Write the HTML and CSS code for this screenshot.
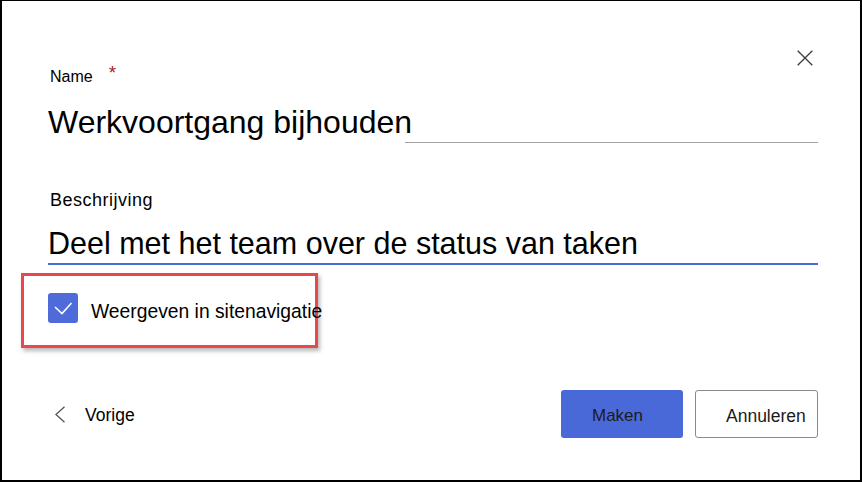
FILE: index.html
```html
<!DOCTYPE html>
<html>
<head>
<meta charset="utf-8">
<link rel="stylesheet" href="styles.css">
</head>
<body>
<div class="frame">
  <div class="close-row">
    <svg class="close" width="16" height="16" viewBox="0 0 16 16"><path d="M0.7 0.7 L15.3 15.3 M15.3 0.7 L0.7 15.3" stroke="#3a3a3a" stroke-width="1.3" fill="none"/></svg>
  </div>
  <div class="label-name">Name<span class="req">*</span></div>
  <div class="name-field">
    <span class="name-text">Werkvoortgang bijhouden</span>
    <span class="name-rule"></span>
  </div>
  <div class="label-desc">Beschrijving</div>
  <div class="desc-field">Deel met het team over de status van taken</div>
  <div class="highlight">
    <span class="checkbox">
      <svg width="30" height="30" viewBox="0 0 30 30"><polyline points="7,14 14,20.5 23.5,10" stroke="#fff" stroke-width="1.6" fill="none"/></svg>
    </span>
    <span class="check-label">Weergeven in sitenavigatie</span>
  </div>
  <div class="footer">
    <div class="back">
      <svg width="10" height="17" viewBox="0 0 10 17"><path d="M9.5 0.8 L1 8.5 L9.5 16.2" stroke="#555" stroke-width="1.3" fill="none"/></svg>
      <span class="back-text">Vorige</span>
    </div>
    <div class="spacer"></div>
    <div class="btn btn-primary">Maken</div>
    <div class="btn btn-secondary">Annuleren</div>
  </div>
</div>
</body>
</html>
```

FILE: styles.css
```css
body {
  margin: 0;
  font-family: "Liberation Sans", Arial, sans-serif;
  color: #000;
  background: #fff;
}

.frame {
  width: 862px;
  height: 482px;
  box-sizing: border-box;
  border: 2px solid #000;
  border-top-width: 1px;
  padding: 0 42px 0 46px;
  display: flex;
  flex-direction: column;
}

.close-row {
  display: flex;
  justify-content: flex-end;
  margin-top: 49px;
  height: 16px;
  padding-right: 5px;
}

.close {
  display: block;
}

.label-name {
  font-size: 16px;
  line-height: 20px;
  padding-left: 2px;
  padding-top: 1px;
  margin-bottom: -1px;
}

.req {
  color: #a4262c;
  font-size: 19px;
  line-height: 0;
  margin-left: 16px;
  vertical-align: 3px;
}

.name-field {
  margin-top: 16px;
  display: flex;
}

.name-text {
  font-size: 32px;
  line-height: 41px;
  width: 357px;
  flex: none;
  white-space: nowrap;
}

.name-rule {
  flex: 1;
  border-bottom: 1px solid #a3a3a3;
}

.label-desc {
  margin-top: 46px;
  padding-left: 2px;
  font-size: 18px;
  letter-spacing: 0.5px;
  line-height: 22px;
}

.desc-field {
  margin-top: 12px;
  font-size: 30.5px;
  line-height: 40px;
  white-space: nowrap;
  border-bottom: 2px solid #4a6ad6;
}

.highlight {
  margin: 8px 0 0 -27px;
  width: 297px;
  box-sizing: border-box;
  border: 3px solid #e8474c;
  padding: 17px 0 22px 24px;
  display: flex;
  align-items: flex-start;
  box-shadow: 2px 3px 4px rgba(0, 0, 0, 0.28);
}

.checkbox {
  width: 30px;
  height: 30px;
  border-radius: 3px;
  background: #4f6bd9;
  flex: none;
  margin-right: 13px;
}

.checkbox svg {
  display: block;
}

.check-label {
  font-size: 19.3px;
  line-height: 22px;
  margin-top: 8px;
  white-space: nowrap;
}

.footer {
  margin-top: 42px;
  display: flex;
  align-items: center;
  height: 48px;
}

.back {
  display: flex;
  align-items: center;
  margin-left: 7px;
}

.back svg {
  display: block;
}

.back-text {
  margin-left: 20px;
  font-size: 17.5px;
  line-height: 20px;
  padding-top: 1px;
}

.spacer {
  flex: 1;
}

.btn {
  height: 48px;
  box-sizing: border-box;
  display: flex;
  align-items: center;
  padding: 4px 0 0 31px;
  color: #1b1b1b;
  white-space: nowrap;
}

.btn-primary {
  width: 122px;
  background: #4a69d9;
  border-radius: 3px;
  font-size: 17px;
  margin-right: 12px;
}

.btn-secondary {
  width: 123px;
  border: 1px solid #8a8a8a;
  border-radius: 3px;
  padding-left: 30px;
  font-size: 17.5px;
  background: #fff;
}
```
